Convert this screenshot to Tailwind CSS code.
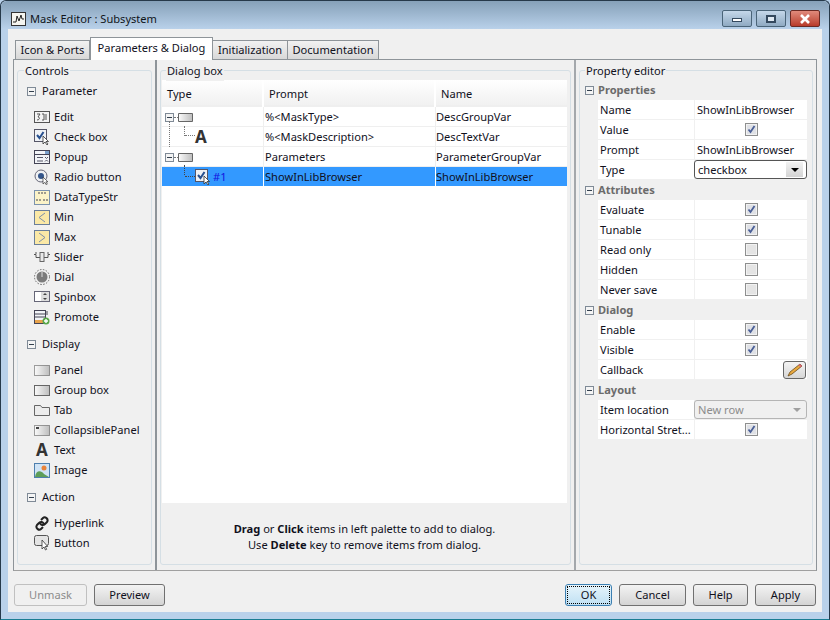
<!DOCTYPE html>
<html lang="en">
<head>
  <meta charset="UTF-8" />
  <title>Mask Editor : Subsystem</title>
  <script src="https://cdn.jsdelivr.net/npm/@tailwindcss/browser@4"></script>
</head>
<body class="w-[830px] h-[620px] overflow-hidden bg-[#b9d1ea] font-['Noto_Sans','Liberation_Sans',sans-serif] text-[11.1px] leading-[20px] text-[#10101c]">
<svg class="absolute w-0 h-0">
  <defs>
    <linearGradient id="fade"><stop offset="0" stop-color="#fbfbfb"/><stop offset="1" stop-color="#bdbdbd"/></linearGradient>
  </defs>
  <symbol id="minus" viewBox="0 0 9 9"><rect x=".5" y=".5" width="8" height="8" fill="#f4f4f4" stroke="#7f8a96"/><path d="M2 4.500h5" stroke="#33404e"/></symbol>
  <symbol id="tick" viewBox="0 0 13 13"><rect x=".5" y=".5" width="12" height="12" fill="#f2f2f2" stroke="#8e8f8f"/><rect x="2" y="2" width="9" height="9" fill="#dfe1e6"/><path d="M3.500 6.500l2 2.500 4-6" fill="none" stroke="#4a5f97" stroke-width="1.800"/></symbol>
  <symbol id="empty" viewBox="0 0 13 13"><rect x=".5" y=".5" width="12" height="12" fill="#f2f2f2" stroke="#8e8f8f"/><rect x="2" y="2" width="9" height="9" fill="#e4e4e4"/></symbol>
  <symbol id="check" viewBox="0 0 16 16"><rect x=".5" y=".5" width="12" height="12" fill="#eef1f5" stroke="#556"/><path d="M3 6l2.500 3 4-6" fill="none" stroke="#27508f" stroke-width="2"/><path d="M9 7v8l2-2 2 3 1-1-2-2.500h2.500z" fill="#fff" stroke="#333" stroke-width=".8"/></symbol>
  <symbol id="group" viewBox="0 0 15 9"><path d="M.5.500h14v8H.5z" fill="url(#fade)" stroke="#666"/></symbol>
</svg>

<div class="relative w-[830px] h-[620px] flex flex-col border border-[#26394a] border-b-[#1b7d92] rounded-t-md">
  <!-- title bar -->
  <div class="h-[28px] shrink-0 flex items-center pt-[7px] pl-[10px] pr-[9px] bg-gradient-to-b from-[#86a1b9] to-[#b9d1ea] rounded-t-md">
    <svg width="15" height="14" viewBox="0 0 15 14"><rect x=".5" y=".5" width="14" height="13" fill="#f5f5f0" stroke="#333"/><path d="M2 10h3l1-6 2 5 2-6 1 4h2" fill="none" stroke="#222"/></svg>
    <span class="ml-[4px] text-[#10151a]">Mask Editor : Subsystem</span>
    <div class="ml-auto flex gap-[4px]">
      <div class="w-[30px] h-[17px] rounded-[2px] border border-[#4a6478] bg-gradient-to-b from-[#c5d8ea] to-[#8faac2] flex items-center justify-center"><div class="w-[10px] h-[4px] mt-[3px] bg-white border border-[#34495e]"></div></div>
      <div class="w-[30px] h-[17px] rounded-[2px] border border-[#4a6478] bg-gradient-to-b from-[#c5d8ea] to-[#8faac2] flex items-center justify-center"><div class="w-[10px] h-[8px] bg-[#dfe9f2] border-2 border-[#34495e]"></div></div>
      <div class="w-[30px] h-[17px] rounded-[2px] border border-[#6b2a24] bg-gradient-to-b from-[#e08a7c] to-[#b83a2a] flex items-center justify-center"><svg width="12" height="10" viewBox="0 0 12 10"><path d="M2 1l8 8M10 1l-8 8" stroke="#fff" stroke-width="2.600"/></svg></div>
    </div>
  </div>

  <!-- client area -->
  <div class="ml-[7px] mr-[7px] h-[583px] bg-[#f0f0f0] flex flex-col px-[5px]">
    <!-- tabs -->
    <div class="flex items-end h-[30px] pl-[2px] shrink-0">
      <div class="w-[75px] h-[19px] border border-[#8e9499] border-b-0 bg-gradient-to-b from-[#f2f2f2] to-[#d8d8d8] text-center leading-[18px]">Icon &amp; Ports</div>
      <div class="w-[123px] h-[23px] border border-[#8e9499] border-b-0 bg-white text-center leading-[20px] relative top-[1px] z-10">Parameters &amp; Dialog</div>
      <div class="w-[75px] h-[19px] border border-[#8e9499] border-b-0 border-l-0 bg-gradient-to-b from-[#f2f2f2] to-[#d8d8d8] text-center leading-[18px]">Initialization</div>
      <div class="w-[91px] h-[19px] border border-[#8e9499] border-b-0 border-l-0 bg-gradient-to-b from-[#f2f2f2] to-[#d8d8d8] text-center leading-[18px]">Documentation</div>
    </div>

    <!-- tab panel -->
    <div class="h-[512px] flex border border-[#8e9499] border-b-[#a0a0a0] shrink-0 bg-[#f0f0f0]">
      <!-- Controls -->
      <div class="w-[141px] shrink-0 pl-[3px] pr-[3px] pt-[10px]">
        <div class="relative h-[495px] border border-[#d5dfe5] rounded-[3px] pl-[9px]">
          <span class="absolute left-[6px] top-[-10px] bg-[#f0f0f0] px-[1px]">Controls</span>
          <div class="flex items-center h-[20px] mt-[10px] gap-[6px]"><svg width="9" height="9"><use href="#minus"/></svg><span>Parameter</span></div>
          <ul class="mt-[6px] ml-[7px]">
            <li class="flex items-center h-[20px] gap-[4px]"><svg width="16" height="13" viewBox="0 0 16 13"><rect x=".5" y=".5" width="15" height="11" fill="#f4f4f4" stroke="#555"/><path d="M3 3h3L4 6c2 0 2 3-1 3M8 3h2v6H8m4-6v6" fill="none" stroke="#555"/></svg><span>Edit</span></li>
            <li class="flex items-center h-[20px] gap-[4px]"><svg width="16" height="16"><use href="#check"/></svg><span>Check box</span></li>
            <li class="flex items-center h-[20px] gap-[4px]"><svg width="16" height="15" viewBox="0 0 16 15"><rect x=".5" y=".5" width="15" height="13" fill="#f2f4f7" stroke="#445"/><path d="M1 4.500h14" stroke="#445"/><rect x="11" y="1" width="4" height="3" fill="#7aa0cc"/><path d="M3 7.500h6M3 11h6M11 7l1.500 1.500L14 7M11 11.500l1.500-1.500 1.500 1.500" stroke="#556" fill="none"/></svg><span>Popup</span></li>
            <li class="flex items-center h-[20px] gap-[4px]"><svg width="16" height="16" viewBox="0 0 16 16"><circle cx="7" cy="7" r="6" fill="#eef0f2" stroke="#667"/><circle cx="7" cy="7" r="3" fill="#34558a"/><path d="M9 8v7l1.800-1.600 1.500 2.400 1-.7-1.400-2.300h2z" fill="#fff" stroke="#333" stroke-width=".7"/></svg><span>Radio button</span></li>
            <li class="flex items-center h-[20px] gap-[4px]"><svg width="16" height="15" viewBox="0 0 16 15"><rect x=".5" y=".5" width="15" height="14" fill="#fbf3c8" stroke="#7c93ae"/><path d="M5 2v3M8 2h0v3M11 2v3M3 9v3M6 9v3M10 9v3M13 9v3" stroke="#445" stroke-dasharray="2 1"/></svg><span>DataTypeStr</span></li>
            <li class="flex items-center h-[20px] gap-[4px]"><svg width="16" height="15" viewBox="0 0 16 15"><rect x=".5" y=".5" width="15" height="14" fill="#fbe9a6" stroke="#6b7f99"/><path d="M11 3L5 7.500l6 4.500" fill="none" stroke="#7d8fa8"/></svg><span>Min</span></li>
            <li class="flex items-center h-[20px] gap-[4px]"><svg width="16" height="15" viewBox="0 0 16 15"><rect x=".5" y=".5" width="15" height="14" fill="#fbe9a6" stroke="#6b7f99"/><path d="M5 3l6 4.500L5 12" fill="none" stroke="#7d8fa8"/></svg><span>Max</span></li>
            <li class="flex items-center h-[20px] gap-[4px]"><svg width="16" height="12" viewBox="0 0 16 12"><path d="M0 3.500h2v3h4M10 6.500h4v-3h2M2 1v2M14 1v2" fill="none" stroke="#555"/><rect x="6" y="1.500" width="4" height="9" fill="#e8e8e8" stroke="#666"/></svg><span>Slider</span></li>
            <li class="flex items-center h-[20px] gap-[4px]"><svg width="16" height="16" viewBox="0 0 16 16"><circle cx="8" cy="8" r="7.500" fill="none" stroke="#666" stroke-dasharray="1.500 1.500"/><circle cx="8" cy="8" r="5.500" fill="#7b7b7b"/><path d="M8 3v5" stroke="#ddd"/></svg><span>Dial</span></li>
            <li class="flex items-center h-[20px] gap-[4px]"><svg width="16" height="12" viewBox="0 0 16 12"><rect x=".5" y=".5" width="15" height="10" fill="#fff" stroke="#667"/><rect x="7" y="1" width="8" height="9" fill="#ddd"/><path d="M9 4l2-2 2 2zM9 7l2 2 2-2z" fill="#444"/></svg><span>Spinbox</span></li>
            <li class="flex items-center h-[20px] gap-[4px]"><svg width="16" height="15" viewBox="0 0 16 15"><rect x=".5" y=".5" width="11" height="13" fill="#f2f4f7" stroke="#445"/><path d="M1 4h10M1 7h10" stroke="#445"/><rect x="1" y="10" width="10" height="3" fill="#e8a34c"/><path d="M13 1v4" stroke="#445"/><circle cx="12" cy="11" r="3.500" fill="#5aa84a"/><path d="M10 11h4M12 9v4" stroke="#fff" stroke-width="1.400"/></svg><span>Promote</span></li>
          </ul>
          <div class="flex items-center h-[20px] mt-[7px] gap-[6px]"><svg width="9" height="9"><use href="#minus"/></svg><span>Display</span></div>
          <ul class="mt-[6px] ml-[7px]">
            <li class="flex items-center h-[20px] gap-[4px]"><svg width="16" height="11" viewBox="0 0 16 11"><rect x=".5" y=".5" width="15" height="10" fill="url(#fade)" stroke="#444" stroke-dasharray="1 1"/></svg><span>Panel</span></li>
            <li class="flex items-center h-[20px] gap-[4px]"><svg width="16" height="11" viewBox="0 0 16 11"><rect x=".5" y=".5" width="15" height="10" fill="url(#fade)" stroke="#666"/></svg><span>Group box</span></li>
            <li class="flex items-center h-[20px] gap-[4px]"><svg width="16" height="11" viewBox="0 0 16 11"><path d="M.5 10.500v-10h6l1.500 2h7.500v8z" fill="#ececec" stroke="#666"/></svg><span>Tab</span></li>
            <li class="flex items-center h-[20px] gap-[4px]"><svg width="16" height="11" viewBox="0 0 16 11"><rect x=".5" y=".5" width="15" height="10" fill="url(#fade)" stroke="#444" stroke-dasharray="1 1"/><rect x="2" y="2" width="3" height="2" fill="#444"/></svg><span>CollapsiblePanel</span></li>
            <li class="flex items-center h-[20px] gap-[4px]"><span class="w-[16px] text-center text-[17px] font-bold text-[#333] leading-[20px]">A</span><span>Text</span></li>
            <li class="flex items-center h-[20px] gap-[4px]"><svg width="16" height="15" viewBox="0 0 16 15"><rect x=".5" y=".5" width="15" height="14" fill="#cfe3f5" stroke="#4d7fae"/><circle cx="10" cy="5" r="2.500" fill="#e8833a"/><path d="M1 14c1-7 6-7 9-3l5 3z" fill="#5d9e58"/></svg><span>Image</span></li>
          </ul>
          <div class="flex items-center h-[20px] mt-[7px] gap-[6px]"><svg width="9" height="9"><use href="#minus"/></svg><span>Action</span></div>
          <ul class="mt-[6px] ml-[7px]">
            <li class="flex items-center h-[20px] gap-[4px]"><svg width="16" height="15" viewBox="0 0 16 15"><path d="M7 4l2-2c2-2 6 1 4 4l-2 2c-2 2-4 1-5-1M9 11l-2 2c-2 2-6-1-4-4l2-2c2-2 4-1 5 1" fill="none" stroke="#222" stroke-width="2"/></svg><span>Hyperlink</span></li>
            <li class="flex items-center h-[20px] gap-[4px]"><svg width="16" height="16" viewBox="0 0 16 16"><rect x=".5" y=".5" width="14" height="10" rx="2" fill="#e4e4e4" stroke="#555"/><path d="M8 5v9l2-2 1.500 3 1.200-.7-1.500-2.800h2.500z" fill="#fff" stroke="#333" stroke-width=".8"/></svg><span>Button</span></li>
          </ul>
        </div>
      </div>

      <!-- Dialog box -->
      <div class="w-[421px] shrink-0 border-x-2 border-[#8e9499] border-r-[#a4a8ac] pl-[3px] pr-[3px] pt-[10px]">
        <div class="relative h-[495px] border border-[#d5dfe5] rounded-[3px] pt-[9px] pl-[1px]">
          <span class="absolute left-[5px] top-[-10px] bg-[#f0f0f0] px-[1px]">Dialog box</span>
          <div class="h-[423px] w-[405px] bg-white">
            <div class="grid grid-cols-[102px_172px_131px] h-[27px] bg-gradient-to-b from-white to-[#f1f1f1] border-b-2 border-[#efefef] leading-[28px]">
              <div class="pl-[5px] border-r-2 border-white">Type</div>
              <div class="pl-[5px] border-r-2 border-white">Prompt</div>
              <div class="pl-[5px]">Name</div>
            </div>
            <div class="grid grid-cols-[102px_172px_131px] h-[20px] border-b border-[#efefef]">
              <div class="pl-[3px] flex items-center border-r border-[#efefef]"><svg width="9" height="9"><use href="#minus"/></svg><span class="w-[4px] border-t border-dotted border-[#777]"></span><svg width="15" height="9"><use href="#group"/></svg></div>
              <div class="pl-[1px] border-r border-[#efefef]">%&lt;MaskType&gt;</div>
              <div>DescGroupVar</div>
            </div>
            <div class="grid grid-cols-[102px_172px_131px] h-[20px] border-b border-[#efefef]">
              <div class="pl-[22px] flex items-center border-r border-[#efefef] relative"><span class="absolute left-[7px] top-[-6px] w-px h-[26px] border-l border-dotted border-[#777]"></span><span class="absolute left-[22px] top-[-1px] h-[10px] border-l border-dotted border-[#777]"></span><span class="w-[10px] ml-px mt-[-3px] border-t border-dotted border-[#777]"></span><span class="text-[17px] font-bold text-[#333]">A</span></div>
              <div class="pl-[1px] border-r border-[#efefef]">%&lt;MaskDescription&gt;</div>
              <div>DescTextVar</div>
            </div>
            <div class="grid grid-cols-[102px_172px_131px] h-[20px] border-b border-[#efefef]">
              <div class="pl-[3px] flex items-center border-r border-[#efefef]"><svg width="9" height="9"><use href="#minus"/></svg><span class="w-[4px] border-t border-dotted border-[#777]"></span><svg width="15" height="9"><use href="#group"/></svg></div>
              <div class="pl-[1px] border-r border-[#efefef]">Parameters</div>
              <div>ParameterGroupVar</div>
            </div>
            <div class="grid grid-cols-[102px_172px_131px] h-[19px] bg-[#3399ff] leading-[19px]">
              <div class="pl-[23px] flex items-center border-r border-white relative"><span class="absolute left-[22px] top-[-2px] h-[10px] border-l border-dotted border-[#444]"></span><span class="w-[10px] border-t border-dotted border-[#444]"></span><svg width="16" height="16"><use href="#check"/></svg><span class="ml-[2px] text-[#1414e0]">#1</span></div>
              <div class="pl-[1px] border-r border-white">ShowInLibBrowser</div>
              <div>ShowInLibBrowser</div>
            </div>
          </div>
          <div class="text-center mt-[18px] leading-[16px] w-[405px]">
            <p><b>Drag</b> or <b>Click</b> items in left palette to add to dialog.</p>
            <p>Use <b>Delete</b> key to remove items from dialog.</p>
          </div>
        </div>
      </div>

      <!-- Property editor -->
      <div class="w-[239px] shrink-0 pl-[3px] pr-[2px] pt-[10px]">
        <div class="relative h-[495px] border border-[#d5dfe5] rounded-[3px] pt-[9px] pl-[5px]">
          <span class="absolute left-[5px] top-[-10px] bg-[#f0f0f0] px-[1px]">Property editor</span>
          <div class="flex items-center h-[20px] gap-[4px] font-bold text-[#6b6b6b]"><svg width="9" height="9"><use href="#minus"/></svg><span>Properties</span></div>
          <div class="ml-[13px] w-[209px] pb-px grid grid-cols-[96px_113px] gap-y-px bg-[#f0f0f0] [&>*]:h-[19px] [&>*]:bg-white [&>*]:leading-[19px]">
            <div class="pl-[2px]">Name</div><div class="pl-[2px] border-l border-[#f0f0f0]">ShowInLibBrowser</div>
            <div class="pl-[2px]">Value</div><div class="flex items-center justify-center border-l border-[#f0f0f0]"><svg width="13" height="13"><use href="#tick"/></svg></div>
            <div class="pl-[2px]">Prompt</div><div class="pl-[2px] border-l border-[#f0f0f0]">ShowInLibBrowser</div>
            <div class="pl-[2px]">Type</div>
            <div class="flex items-center justify-between pl-[3px] pr-[3px] border border-[#555] rounded-[3px]"><span>checkbox</span><span class="w-[17px] h-[15px] bg-gradient-to-b from-[#f2f2f2] to-[#d4d4d4] flex items-center justify-center"><span class="border-x-[4px] border-x-transparent border-t-[4px] border-t-black"></span></span></div>
          </div>
          <div class="flex items-center h-[20px] gap-[4px] font-bold text-[#6b6b6b]"><svg width="9" height="9"><use href="#minus"/></svg><span>Attributes</span></div>
          <div class="ml-[13px] w-[209px] pb-px grid grid-cols-[96px_113px] gap-y-px bg-[#f0f0f0] [&>*]:h-[19px] [&>*]:bg-white [&>*]:leading-[19px]">
            <div class="pl-[2px]">Evaluate</div><div class="flex items-center justify-center border-l border-[#f0f0f0]"><svg width="13" height="13"><use href="#tick"/></svg></div>
            <div class="pl-[2px]">Tunable</div><div class="flex items-center justify-center border-l border-[#f0f0f0]"><svg width="13" height="13"><use href="#tick"/></svg></div>
            <div class="pl-[2px]">Read only</div><div class="flex items-center justify-center border-l border-[#f0f0f0]"><svg width="13" height="13"><use href="#empty"/></svg></div>
            <div class="pl-[2px]">Hidden</div><div class="flex items-center justify-center border-l border-[#f0f0f0]"><svg width="13" height="13"><use href="#empty"/></svg></div>
            <div class="pl-[2px]">Never save</div><div class="flex items-center justify-center border-l border-[#f0f0f0]"><svg width="13" height="13"><use href="#empty"/></svg></div>
          </div>
          <div class="flex items-center h-[20px] gap-[4px] font-bold text-[#6b6b6b]"><svg width="9" height="9"><use href="#minus"/></svg><span>Dialog</span></div>
          <div class="ml-[13px] w-[209px] pb-px grid grid-cols-[96px_113px] gap-y-px bg-[#f0f0f0] [&>*]:h-[19px] [&>*]:bg-white [&>*]:leading-[19px]">
            <div class="pl-[2px]">Enable</div><div class="flex items-center justify-center border-l border-[#f0f0f0]"><svg width="13" height="13"><use href="#tick"/></svg></div>
            <div class="pl-[2px]">Visible</div><div class="flex items-center justify-center border-l border-[#f0f0f0]"><svg width="13" height="13"><use href="#tick"/></svg></div>
            <div class="pl-[2px]">Callback</div>
            <div class="flex items-center justify-end pr-px border-l border-[#f0f0f0]"><span class="w-[23px] h-[18px] rounded-[3px] border border-[#666] bg-gradient-to-b from-[#f4f4f4] to-[#d6d6d6] flex items-center justify-center"><svg width="18" height="14" viewBox="0 0 18 14"><path d="M2 13l2-4L14 1l2 2L6 11z" fill="#e9a93f" stroke="#6b4a18" stroke-width=".8"/><path d="M14 1l2 2-1.500 1.200-2-2z" fill="#d9667a"/></svg></span></div>
          </div>
          <div class="flex items-center h-[20px] gap-[4px] font-bold text-[#6b6b6b]"><svg width="9" height="9"><use href="#minus"/></svg><span>Layout</span></div>
          <div class="ml-[13px] w-[209px] grid grid-cols-[96px_113px] gap-y-px bg-[#f0f0f0] [&>*]:h-[19px] [&>*]:bg-white [&>*]:leading-[19px]">
            <div class="pl-[2px]">Item location</div>
            <div class="flex items-center justify-between !bg-[#f0f0f0] pl-[3px] pr-[3px] border border-[#b5b5b5] rounded-[3px] text-[#8c8c8c]"><span>New row</span><span class="mr-[2px] border-x-[4px] border-x-transparent border-t-[4px] border-t-[#a0a0a0]"></span></div>
            <div class="pl-[2px] whitespace-nowrap">Horizontal Stret...</div><div class="flex items-center justify-center border-l border-[#f0f0f0]"><svg width="13" height="13"><use href="#tick"/></svg></div>
          </div>
        </div>
      </div>
    </div>

    <!-- buttons -->
    <div class="flex items-center pt-[13px] pl-px pr-px [&>button]:h-[22px] [&>button]:rounded-[3px] [&>button]:border [&>button]:border-[#707070] [&>button]:bg-gradient-to-b [&>button]:from-[#f3f3f3] [&>button]:to-[#d4d4d4]">
      <button class="w-[73px] !border-[#c0c0c0] !from-[#f0f0f0] !to-[#f0f0f0] text-[#8c8c8c]">Unmask</button>
      <button class="w-[71px] ml-[7px]">Preview</button>
      <button class="w-[47px] ml-auto !border-[#3c7fb1] !from-[#e6f4fb] !to-[#bfe0f3] outline-1 outline-dotted -outline-offset-3 outline-black">OK</button>
      <button class="w-[67px] ml-[7px]">Cancel</button>
      <button class="w-[55px] ml-[7px]">Help</button>
      <button class="w-[61px] ml-[7px]">Apply</button>
    </div>
  </div>
</div>
</body>
</html>
